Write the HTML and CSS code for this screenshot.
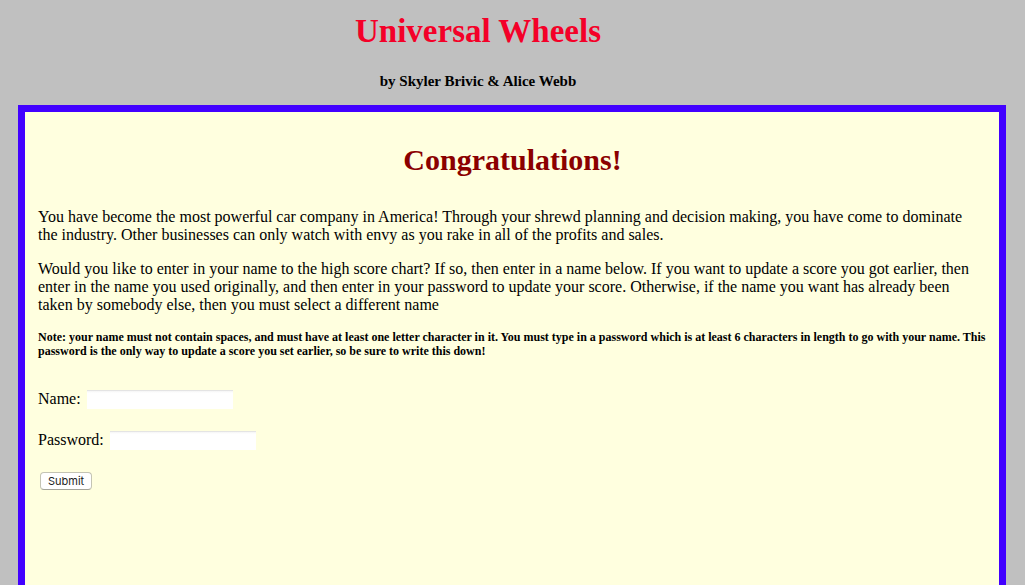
FILE: index.html
```html
<!DOCTYPE html>
<html lang="en">
<head>
<meta charset="utf-8">
<title>Universal Wheels</title>
<link rel="stylesheet" href="styles.css">
</head>
<body>
<header class="masthead">
  <h1 class="site-title">Universal Wheels</h1>
  <p class="byline">by Skyler Brivic &amp; Alice Webb</p>
</header>
<main class="panel">
  <h2 class="panel-title">Congratulations!</h2>
  <p class="text">You have become the most powerful car company in America! Through your shrewd planning and decision making, you have come to dominate the industry. Other businesses can only watch with envy as you rake in all of the profits and sales.</p>
  <p class="text">Would you like to enter in your name to the high score chart? If so, then enter in a name below. If you want to update a score you got earlier, then enter in the name you used originally, and then enter in your password to update your score. Otherwise, if the name you want has already been taken by somebody else, then you must select a different name</p>
  <p class="note">Note: your name must not contain spaces, and must have at least one letter character in it. You must type in a password which is at least 6 characters in length to go with your name. This password is the only way to update a score you set earlier, so be sure to write this down!</p>
  <form class="score-form">
    <div class="field">
      <label for="name">Name:</label>
      <input class="field-input" type="text" id="name" name="name">
    </div>
    <div class="field">
      <label for="password">Password:</label>
      <input class="field-input" type="password" id="password" name="password">
    </div>
    <button class="submit" type="submit">Submit</button>
  </form>
</main>
</body>
</html>
```
FILE: styles.css
```css
* {
  box-sizing: border-box;
}

body {
  display: flex;
  flex-direction: column;
  min-height: 100vh;
  margin: 0;
  padding: 11px 19px 0 18px;
  background: #c0c0c0;
  color: #000;
  font: 16px/18px "Liberation Serif", "Times New Roman", serif;
}

.masthead {
  margin-right: 68px;
  text-align: center;
}

.site-title {
  margin: 0;
  color: #f40028;
  font-size: 33px;
  line-height: 40px;
}

.byline {
  margin: 21px 0 15px;
  font-size: 15px;
  font-weight: bold;
  line-height: 18px;
}

.panel {
  flex: 1;
  padding: 30px 12px 24px 13px;
  border: 7px solid #4200ff;
  border-bottom: 0;
  background: #ffffdf;
}

.panel-title {
  margin: 0 0 30px;
  color: #8b0000;
  font-size: 30px;
  line-height: 36px;
  text-align: center;
}

.text {
  margin: 0 0 16px;
  padding-right: 8px;
}

.note {
  margin: 0;
  font-size: 12px;
  font-weight: bold;
  line-height: 14px;
}

.score-form {
  display: flex;
  flex-direction: column;
  align-items: flex-start;
  gap: 22px;
  margin-top: 32px;
}

.field {
  display: flex;
  align-items: flex-start;
  gap: 6px;
}

.field-input {
  width: 146px;
  height: 19px;
  padding: 1px 3px;
  border: 0;
  border-top: 1px solid #e4e4e4;
  background: linear-gradient(#f5f5f5, #fff 2px);
  font: 11px "Liberation Sans", Arial, sans-serif;
}

.submit {
  height: 18px;
  margin-left: 2px;
  padding: 0 7px;
  border: 1px solid #c4c4b4;
  border-bottom-color: #a4a498;
  border-radius: 4px;
  background: #fff;
  color: #222;
  font: 11px/16px Inter, "Liberation Sans", sans-serif;
}
```
